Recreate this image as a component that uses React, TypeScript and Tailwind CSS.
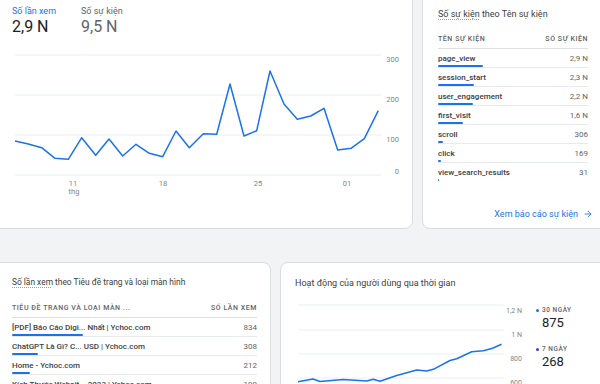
import { ArrowRight } from 'lucide-react';

const events = [
  { name: 'page_view', value: '2,9 N', bar: 45 },
  { name: 'session_start', value: '2,3 N', bar: 36 },
  { name: 'user_engagement', value: '2,2 N', bar: 35 },
  { name: 'first_visit', value: '1,6 N', bar: 25 },
  { name: 'scroll', value: '306', bar: 5 },
  { name: 'click', value: '169', bar: 3 },
  { name: 'view_search_results', value: '31', bar: 1 },
];

const pages = [
  { title: '[PDF] Báo Cáo Digi... Nhất | Ychoc.com', value: '834', bar: 71 },
  { title: 'ChatGPT Là Gì? C... USD | Ychoc.com', value: '308', bar: 26 },
  { title: 'Home - Ychoc.com', value: '212', bar: 18 },
  { title: 'Kích Thước Websit... 2023 | Ychoc.com', value: '199', bar: 17 },
];

const viewsLine =
  '15,141 28.3,144 41.7,147.7 55,158.3 68.3,159.3 81.7,137.7 95.7,155.3 109,139 122.7,156 136,144.3 149.3,153.3 162.7,156.7 176,131 189.3,147.7 203.3,133.7 216.7,134.3 230,84 244,136 256.7,130.7 270,71 284,104 297.3,119.3 310.7,116 324,108.3 337.7,150 351,148.3 364.3,138.7 378.3,110.7';

const usersLine =
  '298,381.7 313,379 320,381.5 343,379.5 366.7,381 373.3,379.2 380,381.3 396.7,375.5 416.7,370 426.7,371 433.3,369.3 450,360.5 456.7,358.7 471.7,351.8 483.3,350.8 492.5,348.2 501.5,344.3';

function TableRow({ label, value, bar, last }: { label: string; value: string; bar: number; last?: boolean }) {
  return (
    <div className={`pt-[5px] ${last ? '' : 'border-b border-[#e8eaed]'}`}>
      <div className="flex justify-between text-[8px] leading-[10px] text-[#3c4043]">
        <span className="font-medium">{label}</span>
        <span className="text-[#5f6368]">{value}</span>
      </div>
      <div className="mt-[1px] h-[2px] bg-[#1a73e8] rounded-full" style={{ width: bar }} />
    </div>
  );
}

export default function App() {
  return (
    <div className="w-[600px] h-[384px] overflow-hidden bg-[#f1f3f4] font-['Roboto',sans-serif]">
      <div className="flex gap-[9px] -mt-[10px] -ml-[10px]">
        {/* Views chart */}
        <div className="w-[423px] h-[239px] shrink-0 bg-white border border-[#dadce0] rounded-lg">
          <div className="flex pt-[14px] pl-[21px]">
            <div className="w-[69px]">
              <div className="text-[9px] leading-[12px] text-[#1a73e8]">Số lần xem</div>
              <div className="text-[16px] leading-[20px] text-[#202124]">2,9 N</div>
            </div>
            <div>
              <div className="text-[9px] leading-[12px] text-[#5f6368]">Số sự kiện</div>
              <div className="text-[16px] leading-[20px] text-[#5f6368]">9,5 N</div>
            </div>
          </div>
          <svg width="410" height="160" viewBox="0 45 410 160" className="ml-[9px] mt-[8px]">
            {[55, 95, 135, 175].map((y) => (
              <line key={y} x1="15" x2="381" y1={y} y2={y} stroke="#ebedf0" strokeWidth="1" />
            ))}
            <g fontSize="7.5" fill="#80868b" textAnchor="end" fontFamily="Roboto, sans-serif">
              <text x="399" y="62">300</text>
              <text x="399" y="102">200</text>
              <text x="399" y="142">100</text>
              <text x="399" y="174">0</text>
            </g>
            <g fontSize="7.5" fill="#80868b" textAnchor="middle" fontFamily="Roboto, sans-serif">
              <text x="73" y="186">11</text>
              <text x="74" y="194">thg</text>
              <text x="163" y="186">18</text>
              <text x="258" y="186">25</text>
              <text x="347" y="186">01</text>
            </g>
            <polyline points={viewsLine} fill="none" stroke="#1a73e8" strokeWidth="1.5" strokeLinejoin="round" />
          </svg>
        </div>

        {/* Events table */}
        <div className="w-[200px] h-[239px] shrink-0 bg-white border border-[#dadce0] rounded-lg pt-[17px] pl-[15px] pr-[33px]">
          <div className="text-[9px] leading-[12px] text-[#3c4043]">
            <span className="underline decoration-dotted decoration-[#9aa0a6] underline-offset-2">Số sự kiện</span> theo Tên sự kiện
          </div>
          <div className="mt-[14px] pb-[4px] border-b border-[#e0e0e0] flex justify-between text-[7px] leading-[10px] tracking-[0.08em] text-[#5f6368] font-medium">
            <span>TÊN SỰ KIỆN</span>
            <span>SỐ SỰ KIỆN</span>
          </div>
          {events.map((e, i) => (
            <TableRow key={e.name} label={e.name} value={e.value} bar={e.bar} last={i === events.length - 1} />
          ))}
          <div className="mt-[27px] -mr-[5px] flex justify-end items-center gap-[5px] text-[9px] leading-[12px] text-[#1a73e8]">
            <span>Xem báo cáo sự kiện</span>
            <ArrowRight size={10} strokeWidth={2} />
          </div>
        </div>
      </div>

      <div className="flex gap-[9px] mt-[33px] -ml-[10px]">
        {/* Page titles table */}
        <div className="w-[281px] h-[140px] shrink-0 bg-white border border-[#dadce0] rounded-lg pt-[13px] pl-[21px] pr-[13px]">
          <div className="text-[8.4px] leading-[12px] text-[#3c4043]">
            <span className="underline decoration-dotted decoration-[#9aa0a6] underline-offset-2">Số lần xem</span> theo Tiêu đề trang và loại màn hình
          </div>
          <div className="mt-[15px] pb-[4px] border-b border-[#e0e0e0] flex justify-between text-[7px] leading-[10px] tracking-[0.08em] text-[#5f6368] font-medium">
            <span>TIÊU ĐỀ TRANG VÀ LOẠI MÀN ...</span>
            <span>SỐ LẦN XEM</span>
          </div>
          {pages.map((p) => (
            <TableRow key={p.title} label={p.title} value={p.value} bar={p.bar} />
          ))}
        </div>

        {/* User activity */}
        <div className="w-[330px] h-[140px] shrink-0 bg-white border border-[#dadce0] rounded-lg pt-[14px] pl-[14px]">
          <div className="text-[9px] leading-[12px] text-[#3c4043]">Hoạt động của người dùng qua thời gian</div>
          <div className="flex mt-[6px]">
            <svg width="232" height="90" viewBox="295 295 232 90" className="shrink-0">
              {[305, 330, 354, 378].map((y) => (
                <line key={y} x1="298" x2="504" y1={y} y2={y} stroke="#ebedf0" strokeWidth="1" />
              ))}
              <g fontSize="7" fill="#80868b" textAnchor="end" fontFamily="Roboto, sans-serif">
                <text x="522" y="313">1,2 N</text>
                <text x="522" y="337">1 N</text>
                <text x="522" y="361">800</text>
                <text x="522" y="385">600</text>
              </g>
              <polyline points={usersLine} fill="none" stroke="#1a73e8" strokeWidth="1.5" strokeLinejoin="round" />
            </svg>
            <div className="ml-[9px] pt-[11px]">
              <div className="flex items-center gap-[3px] text-[6.5px] leading-[8px] tracking-[0.08em] text-[#5f6368] font-medium">
                <span className="w-[3px] h-[3px] rounded-full bg-[#1a73e8]" />
                30 NGÀY
              </div>
              <div className="mt-[1px] pl-[6px] text-[13px] leading-[16px] text-[#202124]">875</div>
              <div className="mt-[14px] flex items-center gap-[3px] text-[6.5px] leading-[8px] tracking-[0.08em] text-[#5f6368] font-medium">
                <span className="w-[3px] h-[3px] rounded-full bg-[#3b3fd0]" />
                7 NGÀY
              </div>
              <div className="mt-[1px] pl-[6px] text-[13px] leading-[16px] text-[#202124]">268</div>
            </div>
          </div>
        </div>
      </div>
    </div>
  );
}
